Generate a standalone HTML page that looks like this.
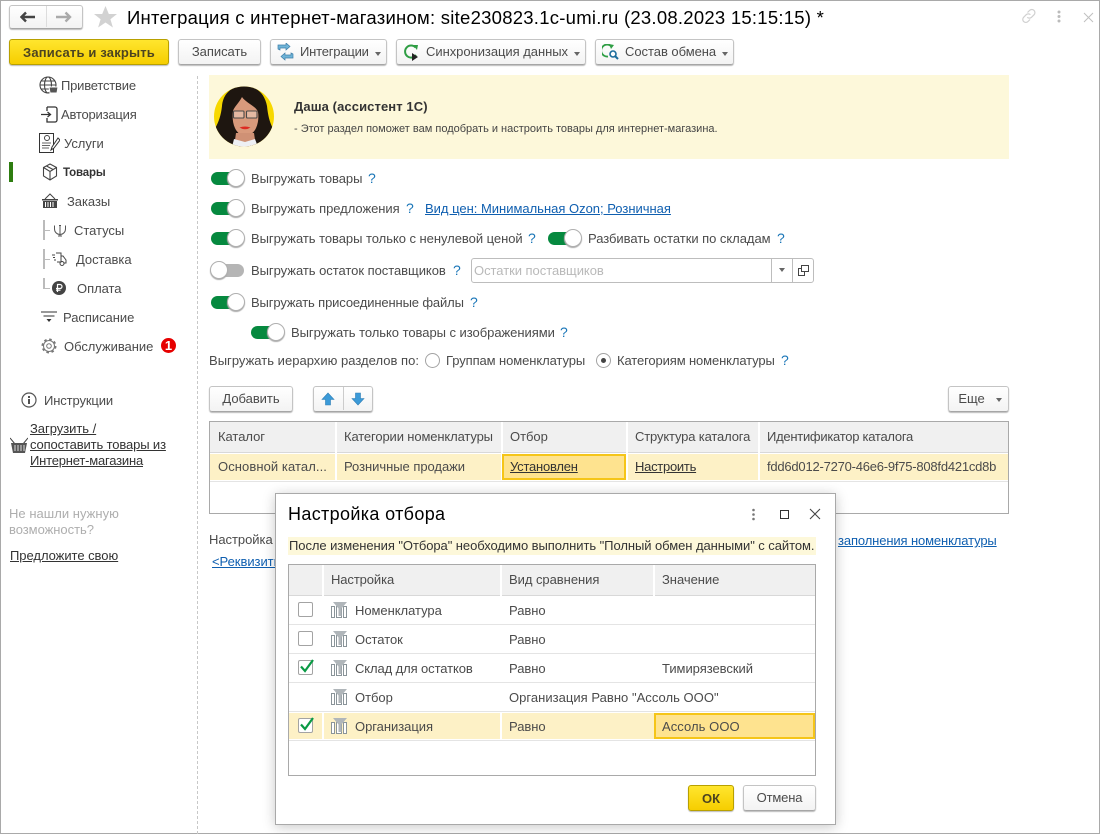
<!DOCTYPE html>
<html lang="ru"><head><meta charset="utf-8"><title>Интеграция</title>
<style>
html,body{margin:0;padding:0;background:#fff}
#p{position:relative;width:1100px;height:834px;overflow:hidden;background:#fff;font-family:"Liberation Sans",Arial,sans-serif;font-size:13px;letter-spacing:-.04px;color:#4b4b4b}
#p div,#p svg,#p a{position:absolute}
.t{white-space:nowrap;line-height:16px;height:16px}
.u{text-decoration:underline;color:#333}
.l{text-decoration:underline;color:#0f5fb0}
.q{color:#1a76b8;font-size:14px;letter-spacing:0}
.b{box-sizing:border-box;height:26px;border:1px solid #c4c4c4;border-bottom-color:#a6a6a6;border-radius:3px;background:linear-gradient(#fff,#f3f3f3);box-shadow:0 1px 1px #bbb;text-align:center;line-height:24px;white-space:nowrap}
.y{box-sizing:border-box;border:1px solid #b8a000;border-radius:3px;background:linear-gradient(#ffe62e,#f6ce00);box-shadow:0 1px 1px #bbb;text-align:center;font-weight:bold;white-space:nowrap;color:#4d4420}
.sw{width:33px;height:13px;border-radius:7px;background:#06893f}
.sw::after{content:"";position:absolute;box-sizing:border-box;left:16px;top:-3px;width:18px;height:18px;border-radius:50%;background:#fff;border:1px solid #b0b0b0;box-shadow:0 1px 1px #aaa}
.sw.off{background:#b5b5b5}
.sw.off::after{left:-1px}
.cb{box-sizing:border-box;width:15px;height:15px;border:1px solid #a3a3a3;border-radius:2px;background:#fff}
.arr{width:0;height:0;border:3px solid transparent;border-top:4px solid #666;border-bottom:0}
</style></head><body><div id="p">

<!-- window frame -->
<div style="left:0;top:0;width:1100px;height:1px;background:#a9a9a9"></div>
<div style="left:0;top:0;width:1px;height:834px;background:#a9a9a9"></div>
<div style="left:1099px;top:0;width:1px;height:834px;background:#a9a9a9"></div>
<div style="left:0;top:833px;width:1100px;height:1px;background:#a9a9a9"></div>

<!-- nav buttons -->
<div class="b" style="left:9px;top:5px;width:74px;height:24px"></div>
<div style="left:46px;top:6px;width:1px;height:21px;background:#ddd"></div>
<svg style="left:20px;top:11px" width="16" height="12" viewBox="0 0 16 12"><path d="M1 6h14M6 1.500L1.500 6 6 10.500" fill="none" stroke="#444" stroke-width="2.400"/></svg>
<svg style="left:56px;top:11px" width="16" height="12" viewBox="0 0 16 12"><path d="M0 6h14M9.500 1.500L14 6 9.500 10.500" fill="none" stroke="#aaa" stroke-width="2.400"/></svg>
<svg style="left:93px;top:5px" width="25" height="24" viewBox="0 0 25 24"><path d="M12.500 1l3.300 8h8.200l-6.600 5.200 2.500 8.300-7.400-5-7.400 5 2.500-8.300L1 9h8.200z" fill="#d2d2d2"/></svg>
<div class="t" style="left:127px;top:7px;height:22px;line-height:22px;font-size:18.500px;letter-spacing:.25px;color:#000">Интеграция с интернет-магазином: site230823.1c-umi.ru (23.08.2023 15:15:15) *</div>

<!-- top right -->
<svg style="left:1020px;top:7px" width="18" height="18" viewBox="0 0 18 18"><g fill="none" stroke="#d0d0d0" stroke-width="1.200"><path d="M7.500 5.500l2-2a3 3 0 0 1 4.600 4.200l-2.600 2.600a3 3 0 0 1-4.200 0"/><path d="M10 12.500l-2 2a3 3 0 0 1-4.400-4.200l2.600-2.600a3 3 0 0 1 4.200 0"/></g></svg>
<svg style="left:1056px;top:10px" width="6" height="14"><circle cx="3" cy="2" r="1.500" fill="#bbb"/><circle cx="3" cy="6.500" r="1.500" fill="#bbb"/><circle cx="3" cy="11" r="1.500" fill="#bbb"/></svg>
<svg style="left:1083px;top:12px" width="11" height="11"><path d="M1 1l9 9M10 1l-9 9" stroke="#c0c0c0" stroke-width="1"/></svg>

<!-- toolbar -->
<div class="y" style="left:9px;top:39px;width:160px;height:26px;line-height:25px;font-size:13px;letter-spacing:.17px">Записать и закрыть</div>
<div class="b" style="left:178px;top:39px;width:83px">Записать</div>
<div class="b" style="left:270px;top:39px;width:117px;padding-left:29px;padding-right:15px;text-align:left;letter-spacing:-.2px">Интеграции</div>
<svg style="left:277px;top:43px" width="17" height="18" viewBox="0 0 17 18"><path d="M1 6V2h8V0l4 3.500L9 7V5H3v2zM16 11v4H8v2l-4-3.500L8 10v2h6v-2z" fill="#6fb4d8" stroke="#3e7ea8" stroke-width=".7"/></svg>
<div class="arr" style="left:375px;top:52px"></div>
<div class="b" style="left:396px;top:39px;width:190px;padding-left:29px;text-align:left">Синхронизация данных</div>
<svg style="left:403px;top:44px" width="17" height="17" viewBox="0 0 17 17"><path d="M12.500 3.500A6 6 0 1 0 13 11" fill="none" stroke="#2f9e44" stroke-width="2"/><path d="M10 1l5 0-1 5z" fill="#2f9e44"/><path d="M9 9l6 4-6 4z" fill="#222"/></svg>
<div class="arr" style="left:574px;top:52px"></div>
<div class="b" style="left:595px;top:39px;width:139px;padding-left:29px;text-align:left">Состав обмена</div>
<svg style="left:602px;top:44px" width="18" height="17" viewBox="0 0 18 17"><path d="M10 3A6 6 0 1 0 6 12.500" fill="none" stroke="#2f9e44" stroke-width="1.800"/><path d="M7 0l5 1-3 4z" fill="#2f9e44"/><circle cx="11" cy="10" r="3" fill="#fff" stroke="#1c6d9c" stroke-width="1.600"/><path d="M13 12l3 3" stroke="#1c6d9c" stroke-width="2"/></svg>
<div class="arr" style="left:722px;top:52px"></div>

<!-- sidebar divider -->
<div style="left:197px;top:76px;height:758px;width:0;border-left:1px dashed #c8c8c8"></div>

<!-- sidebar -->
<svg style="left:39px;top:76px" width="20" height="20" viewBox="0 0 20 20"><g fill="none" stroke="#444" stroke-width="1.100"><circle cx="9" cy="9" r="8"/><ellipse cx="9" cy="9" rx="3.500" ry="8"/><path d="M1 9h16M2 5h14M2 13h14"/></g><path d="M10 11h9l-1 6h-7z" fill="#555" stroke="#fff"/></svg>
<div class="t" style="left:61px;top:78px;letter-spacing:-.2px">Приветствие</div>
<svg style="left:41px;top:105px" width="18" height="19" viewBox="0 0 18 19"><path d="M6 2h8a2 2 0 0 1 2 2v11a2 2 0 0 1-2 2H6V13M6 6V2" fill="none" stroke="#333" stroke-width="1.300"/><path d="M0 9.500h9M6.500 7l3 2.500-3 2.500" fill="none" stroke="#333" stroke-width="1.300"/></svg>
<div class="t" style="left:61px;top:107px;letter-spacing:-.2px">Авторизация</div>
<svg style="left:39px;top:133px" width="21" height="20" viewBox="0 0 21 20"><rect x=".5" y=".5" width="14" height="19" fill="none" stroke="#333"/><circle cx="8" cy="5" r="2.500" fill="none" stroke="#444"/><path d="M3 10h9M3 12.500h8M3 15h7" stroke="#666"/><path d="M19 5l-6 9-1 3 3-2 6-8z" fill="#fff" stroke="#333"/></svg>
<div class="t" style="left:64px;top:136px">Услуги</div>
<div style="left:9px;top:162px;width:4px;height:20px;background:#2e7d10"></div>
<svg style="left:42px;top:163px" width="16" height="18" viewBox="0 0 16 18"><path d="M8 1l6.500 3.500v8.500L8 17l-6.500-4V4.500zM1.500 4.500L8 8.500l6.500-4M8 8.500V17M4.500 3l6.500 3.500" fill="none" stroke="#444" stroke-width="1.100"/></svg>
<div class="t" style="left:63px;top:165px;font-weight:bold;font-size:11.500px;letter-spacing:-.15px;color:#333">Товары</div>
<svg style="left:41px;top:193px" width="18" height="16" viewBox="0 0 18 16"><path d="M1 6h16v1.500H1zM2 8h14v7H2z" fill="#444"/><path d="M4.500 9v5M7 9v5M9.500 9v5M12 9v5" stroke="#fff"/><path d="M4 6l5-5 5 5" fill="none" stroke="#444"/></svg>
<div class="t" style="left:67px;top:194px">Заказы</div>
<div style="left:43px;top:220px;width:2px;height:20px;background:#bbb"></div>
<div style="left:45px;top:230px;width:5px;height:1px;background:#bbb"></div>
<svg style="left:54px;top:225px" width="12" height="12" viewBox="0 0 12 12"><path d="M6 0v11M.5 1v3a3.500 3.500 0 0 0 11 0V1M4 11h4M0 1h1M11 1h1M5 .5h2" fill="none" stroke="#555"/></svg>
<div class="t" style="left:74px;top:223px">Статусы</div>
<div style="left:43px;top:249px;width:2px;height:20px;background:#bbb"></div>
<div style="left:45px;top:259px;width:5px;height:1px;background:#bbb"></div>
<svg style="left:52px;top:252px" width="15" height="15" viewBox="0 0 15 15"><path d="M4 1h5v9H5M9 4h2l3 4v3h-2M0 3h3M1 5.500h2M2 8h2" fill="none" stroke="#444"/><circle cx="10" cy="11.500" r="2" fill="none" stroke="#444"/></svg>
<div class="t" style="left:76px;top:252px">Доставка</div>
<div style="left:43px;top:278px;width:2px;height:10px;background:#bbb"></div>
<div style="left:43px;top:288px;width:7px;height:1px;background:#bbb"></div>
<svg style="left:52px;top:281px" width="14" height="14" viewBox="0 0 14 14"><circle cx="7" cy="7" r="7" fill="#444"/><path d="M5.500 11V3.500h2.500a2 2 0 0 1 0 4H4M4 9.200h4.500" fill="none" stroke="#fff" stroke-width="1.200"/></svg>
<div class="t" style="left:77px;top:281px">Оплата</div>
<svg style="left:41px;top:311px" width="17" height="12" viewBox="0 0 17 12"><path d="M0 1h16M2.500 5h11" stroke="#333"/><path d="M5.500 8h5L8 11z" fill="#333"/></svg>
<div class="t" style="left:63px;top:310px">Расписание</div>
<svg style="left:41px;top:338px" width="16" height="16" viewBox="0 0 16 16"><circle cx="8" cy="8" r="2.300" fill="none" stroke="#777"/><circle cx="8" cy="8" r="5.500" fill="none" stroke="#777"/><circle cx="8" cy="8" r="6.500" fill="none" stroke="#777" stroke-width="2" stroke-dasharray="2.500 2.600"/></svg>
<div class="t" style="left:64px;top:339px">Обслуживание</div>
<div class="t" style="left:161px;top:338px;width:15px;height:15px;border-radius:50%;background:#e60000;color:#fff;font-weight:bold;font-size:13px;line-height:15px;text-align:center;letter-spacing:0">1</div>

<svg style="left:21px;top:392px" width="16" height="16" viewBox="0 0 16 16"><circle cx="8" cy="8" r="7" fill="none" stroke="#555" stroke-width="1.200"/><path d="M8 7v5M8 4v2" stroke="#333" stroke-width="1.700"/></svg>
<div class="t" style="left:44px;top:393px;letter-spacing:-.12px">Инструкции</div>
<svg style="left:10px;top:437px" width="18" height="17" viewBox="0 0 18 17"><path d="M0 1l5 6M18 1l-5 6" stroke="#444"/><path d="M1 6h16l-2 10H3z" fill="#555"/><path d="M5 8v6M8 8v6M11 8v6M14 8v6" stroke="#ddd"/></svg>
<div class="t u" style="left:30px;top:421px">Загрузить /</div>
<div class="t u" style="left:30px;top:437px;letter-spacing:-.13px">сопоставить товары из</div>
<div class="t u" style="left:30px;top:453px;letter-spacing:-.2px">Интернет-магазина</div>
<div class="t" style="left:9px;top:506px;color:#aeaeae;letter-spacing:.03px">Не нашли нужную</div>
<div class="t" style="left:9px;top:522px;color:#aeaeae">возможность?</div>
<div class="t u" style="left:10px;top:548px">Предложите свою</div>

<!-- assistant -->
<div style="left:209px;top:75px;width:800px;height:84px;background:#fdf8da"></div>
<svg style="left:214px;top:86px" width="60" height="61" viewBox="0 0 60 61">
<defs><clipPath id="c"><circle cx="30" cy="30.500" r="30"/></clipPath></defs>
<circle cx="30" cy="30.500" r="30" fill="#f7d800"/>
<g clip-path="url(#c)">
<path d="M30 0C16 0 9 9 8 20 7 30 4 38 0 44v17h60V44c-4-6-6-14-7-24C51 9 44 0 30 0z" fill="#1e1610"/>
<path d="M28 11C25 17 20 21 19 25c-1 7 0 14 3 19 3 4 6 7 9 7s7-3 10-7c3-5 4-12 3-18-2-6-12-9-16-15z" fill="#d89a7c"/>
<path d="M22 47h18l2 14H20z" fill="#cf9175"/>
<path d="M20 53l11 3 10-3 3 8H18z" fill="#eef0f4"/>
<rect x="19.500" y="25" width="10.500" height="7" rx="1" fill="#e5b9a2" stroke="#4a4a48" stroke-width="1.100"/><rect x="32.500" y="25" width="10.500" height="7" rx="1" fill="#e5b9a2" stroke="#4a4a48" stroke-width="1.100"/>
<path d="M25.500 41.500q5.500-2 11 0-5.500 3.500-11 0z" fill="#dd2a22"/>
</g></svg>
<div class="t" style="left:294px;top:99px;font-weight:bold;font-size:13px;letter-spacing:.1px;color:#333">Даша (ассистент 1С)</div>
<div class="t" style="left:294px;top:121px;font-size:11px;letter-spacing:0;color:#444">- Этот раздел поможет вам подобрать и настроить товары для интернет-магазина.</div>

<!-- options -->
<div class="sw" style="left:211px;top:172px"></div>
<div class="t" style="left:251px;top:171px">Выгружать товары</div><div class="t q" style="left:368px;top:170px">?</div>
<div class="sw" style="left:211px;top:202px"></div>
<div class="t" style="left:251px;top:201px">Выгружать предложения</div><div class="t q" style="left:406px;top:200px">?</div>
<a class="t l" style="left:425px;top:201px;letter-spacing:-.01px">Вид цен: Минимальная Ozon; Розничная</a>
<div class="sw" style="left:211px;top:232px"></div>
<div class="t" style="left:251px;top:231px">Выгружать товары только с ненулевой ценой</div><div class="t q" style="left:528px;top:230px">?</div>
<div class="sw" style="left:548px;top:232px"></div>
<div class="t" style="left:588px;top:231px">Разбивать остатки по складам</div><div class="t q" style="left:777px;top:230px">?</div>
<div class="sw off" style="left:211px;top:264px"></div>
<div class="t" style="left:251px;top:263px">Выгружать остаток поставщиков</div><div class="t q" style="left:453px;top:262px">?</div>
<div style="box-sizing:border-box;left:471px;top:258px;width:343px;height:25px;border:1px solid #bdbdbd;border-radius:3px;background:#fff"></div>
<div class="t" style="left:474px;top:263px;color:#b9b9b9">Остатки поставщиков</div>
<div style="left:771px;top:259px;width:1px;height:23px;background:#bdbdbd"></div>
<div style="left:792px;top:259px;width:1px;height:23px;background:#bdbdbd"></div>
<div class="arr" style="left:779px;top:268px"></div>
<svg style="left:798px;top:265px" width="11" height="11" viewBox="0 0 11 11"><path d="M3.500.5h7v6h-7zM3.500 3.500H.5v7h6v-4" fill="none" stroke="#444"/></svg>
<div class="sw" style="left:211px;top:296px"></div>
<div class="t" style="left:251px;top:295px;letter-spacing:-.13px">Выгружать присоединенные файлы</div><div class="t q" style="left:470px;top:294px">?</div>
<div class="sw" style="left:251px;top:326px"></div>
<div class="t" style="left:291px;top:325px">Выгружать только товары с изображениями</div><div class="t q" style="left:560px;top:324px">?</div>
<div class="t" style="left:209px;top:353px;letter-spacing:.02px">Выгружать иерархию разделов по:</div>
<div style="box-sizing:border-box;left:425px;top:353px;width:15px;height:15px;border:1px solid #a3a3a3;border-radius:50%"></div>
<div class="t" style="left:446px;top:353px;letter-spacing:-.09px">Группам номенклатуры</div>
<div style="box-sizing:border-box;left:596px;top:353px;width:15px;height:15px;border:1px solid #a3a3a3;border-radius:50%"></div>
<div style="left:601px;top:358px;width:5px;height:5px;border-radius:50%;background:#444"></div>
<div class="t" style="left:617px;top:353px;letter-spacing:-.12px">Категориям номенклатуры</div><div class="t q" style="left:781px;top:352px">?</div>

<!-- add row -->
<div class="b" style="left:209px;top:386px;width:84px">Добавить</div>
<div class="b" style="left:313px;top:386px;width:60px"></div>
<div style="left:343px;top:387px;width:1px;height:23px;background:#ccc"></div>
<svg style="left:321px;top:392px" width="14" height="14" viewBox="0 0 14 14"><path d="M7 1l6 6.500H9.500V13h-5V7.500H1z" fill="#3b9ad8" stroke="#2f7fb5" stroke-width=".6"/></svg>
<svg style="left:351px;top:392px" width="14" height="14" viewBox="0 0 14 14"><path d="M7 13L1 6.500h3.500V1h5v5.500H13z" fill="#3b9ad8" stroke="#2f7fb5" stroke-width=".6"/></svg>
<div class="b" style="left:948px;top:386px;width:61px;padding-right:14px">Еще</div>
<div class="arr" style="left:996px;top:398px"></div>

<!-- catalog table -->
<div style="box-sizing:border-box;left:209px;top:421px;width:800px;height:93px;border:1px solid #a9a9a9;background:#fff"></div>
<div style="left:210px;top:422px;width:798px;height:30px;background:#f0f0f0"></div>
<div style="left:210px;top:452px;width:798px;height:1px;background:#d8d8d8"></div>
<div style="left:210px;top:454px;width:798px;height:26px;background:#fdf1c6"></div>
<div style="left:210px;top:481px;width:798px;height:1px;background:#e4e4e4"></div>
<div style="left:335px;top:422px;width:2px;height:58px;background:#fff"></div>
<div style="left:501px;top:422px;width:2px;height:58px;background:#fff"></div>
<div style="left:626px;top:422px;width:2px;height:58px;background:#fff"></div>
<div style="left:758px;top:422px;width:2px;height:58px;background:#fff"></div>
<div style="box-sizing:border-box;left:502px;top:454px;width:124px;height:26px;border:2px solid #f5c518;background:#fee38f"></div>
<div class="t" style="left:218px;top:429px">Каталог</div>
<div class="t" style="left:344px;top:429px;letter-spacing:-.13px">Категории номенклатуры</div>
<div class="t" style="left:510px;top:429px">Отбор</div>
<div class="t" style="left:635px;top:429px;letter-spacing:-.15px">Структура каталога</div>
<div class="t" style="left:767px;top:429px;letter-spacing:-.27px">Идентификатор каталога</div>
<div class="t" style="left:218px;top:459px;letter-spacing:.08px">Основной катал...</div>
<div class="t" style="left:344px;top:459px">Розничные продажи</div>
<div class="t u" style="left:510px;top:459px;letter-spacing:-.22px">Установлен</div>
<div class="t u" style="left:635px;top:459px;letter-spacing:-.27px">Настроить</div>
<div class="t" style="left:767px;top:459px;letter-spacing:-.22px">fdd6d012-7270-46e6-9f75-808fd421cd8b</div>
<div class="t" style="left:209px;top:532px">Настройка</div>
<a class="t l" style="left:212px;top:554px">&lt;Реквизиты</a>
<a class="t l" style="left:838px;top:533px;letter-spacing:-.12px">заполнения номенклатуры</a>

<!-- dialog -->
<div style="box-sizing:border-box;left:275px;top:493px;width:561px;height:332px;background:#fff;border:1px solid #a9a9a9;box-shadow:0 2px 12px rgba(0,0,0,.22)"></div>
<div class="t" style="left:288px;top:503px;height:22px;line-height:22px;font-size:18px;letter-spacing:.35px;color:#000">Настройка отбора</div>
<svg style="left:751px;top:508px" width="5" height="13"><circle cx="2.500" cy="2" r="1.300" fill="#777"/><circle cx="2.500" cy="6.500" r="1.300" fill="#777"/><circle cx="2.500" cy="11" r="1.300" fill="#777"/></svg>
<div style="box-sizing:border-box;left:780px;top:510px;width:9px;height:9px;border:1px solid #333"></div>
<svg style="left:809px;top:508px" width="12" height="12"><path d="M1 1l10 10M11 1L1 11" stroke="#444" stroke-width="1.100"/></svg>
<div style="left:288px;top:537px;width:528px;height:18px;background:#fdf8da"></div>
<div class="t" style="left:289px;top:538px;color:#333;letter-spacing:-.065px">После изменения "Отбора" необходимо выполнить "Полный обмен данными" с сайтом.</div>

<div style="box-sizing:border-box;left:288px;top:564px;width:528px;height:212px;border:1px solid #a9a9a9;background:#fff"></div>
<div style="left:289px;top:565px;width:526px;height:30px;background:#f0f0f0"></div>
<div style="left:289px;top:595px;width:526px;height:1px;background:#d8d8d8"></div>
<div style="left:289px;top:624px;width:526px;height:1px;background:#e4e4e4"></div>
<div style="left:289px;top:653px;width:526px;height:1px;background:#e4e4e4"></div>
<div style="left:289px;top:682px;width:526px;height:1px;background:#e4e4e4"></div>
<div style="left:289px;top:711px;width:526px;height:1px;background:#e4e4e4"></div>
<div style="left:289px;top:713px;width:526px;height:26px;background:#fdf1c6"></div>
<div style="left:289px;top:740px;width:526px;height:1px;background:#e4e4e4"></div>
<div style="left:322px;top:565px;width:2px;height:31px;background:#fff"></div>
<div style="left:500px;top:565px;width:2px;height:31px;background:#fff"></div>
<div style="left:653px;top:565px;width:2px;height:31px;background:#fff"></div>
<div style="left:322px;top:713px;width:2px;height:26px;background:#fff"></div>
<div style="left:500px;top:713px;width:2px;height:26px;background:#fff"></div>
<div style="box-sizing:border-box;left:654px;top:713px;width:161px;height:26px;border:2px solid #f5c518;background:#fee38f"></div>

<div class="t" style="left:331px;top:572px;letter-spacing:-.1px">Настройка</div>
<div class="t" style="left:509px;top:572px">Вид сравнения</div>
<div class="t" style="left:662px;top:572px">Значение</div>

<div class="cb" style="left:298px;top:602px"></div>
<div class="cb" style="left:298px;top:631px"></div>
<div class="cb" style="left:298px;top:660px"></div>
<div class="cb" style="left:298px;top:718px"></div>
<svg style="left:299px;top:657px" width="16" height="17" viewBox="0 0 16 17"><path d="M2 9.500l4 4.500 8-11" fill="none" stroke="#0a9a45" stroke-width="2.200"/></svg>
<svg style="left:299px;top:715px" width="16" height="17" viewBox="0 0 16 17"><path d="M2 9.500l4 4.500 8-11" fill="none" stroke="#0a9a45" stroke-width="2.200"/></svg>

<svg style="left:331px;top:602px" width="16" height="16" viewBox="0 0 16 16"><path d="M.5 4.500h3v11h-3zM5.500 4.500h5v11h-5zM12.500 4.500h3v11h-3z" fill="#fff" stroke="#8a9499"/><path d="M2 0h14l-5.500 6.500V14h-3V6.500z" fill="#b0b6ba"/></svg>
<svg style="left:331px;top:631px" width="16" height="16" viewBox="0 0 16 16"><path d="M.5 4.500h3v11h-3zM5.500 4.500h5v11h-5zM12.500 4.500h3v11h-3z" fill="#fff" stroke="#8a9499"/><path d="M2 0h14l-5.500 6.500V14h-3V6.500z" fill="#b0b6ba"/></svg>
<svg style="left:331px;top:660px" width="16" height="16" viewBox="0 0 16 16"><path d="M.5 4.500h3v11h-3zM5.500 4.500h5v11h-5zM12.500 4.500h3v11h-3z" fill="#fff" stroke="#8a9499"/><path d="M2 0h14l-5.500 6.500V14h-3V6.500z" fill="#b0b6ba"/></svg>
<svg style="left:331px;top:689px" width="16" height="16" viewBox="0 0 16 16"><path d="M.5 4.500h3v11h-3zM5.500 4.500h5v11h-5zM12.500 4.500h3v11h-3z" fill="#fff" stroke="#8a9499"/><path d="M2 0h14l-5.500 6.500V14h-3V6.500z" fill="#b0b6ba"/></svg>
<svg style="left:331px;top:718px" width="16" height="16" viewBox="0 0 16 16"><path d="M.5 4.500h3v11h-3zM5.500 4.500h5v11h-5zM12.500 4.500h3v11h-3z" fill="#fff" stroke="#8a9499"/><path d="M2 0h14l-5.500 6.500V14h-3V6.500z" fill="#b0b6ba"/></svg>

<div class="t" style="left:355px;top:603px">Номенклатура</div><div class="t" style="left:509px;top:603px">Равно</div>
<div class="t" style="left:355px;top:632px">Остаток</div><div class="t" style="left:509px;top:632px">Равно</div>
<div class="t" style="left:355px;top:661px;letter-spacing:-.1px">Склад для остатков</div><div class="t" style="left:509px;top:661px">Равно</div><div class="t" style="left:662px;top:661px">Тимирязевский</div>
<div class="t" style="left:355px;top:690px">Отбор</div><div class="t" style="left:509px;top:690px;letter-spacing:.03px">Организация Равно "Ассоль ООО"</div>
<div class="t" style="left:355px;top:719px">Организация</div><div class="t" style="left:509px;top:719px">Равно</div><div class="t" style="left:662px;top:719px;letter-spacing:.06px">Ассоль ООО</div>

<div class="y" style="left:688px;top:785px;width:46px;height:26px;line-height:25px;font-size:13px;letter-spacing:0">ОК</div>
<div class="b" style="left:743px;top:785px;width:73px;letter-spacing:-.15px">Отмена</div>

</div></body></html>
